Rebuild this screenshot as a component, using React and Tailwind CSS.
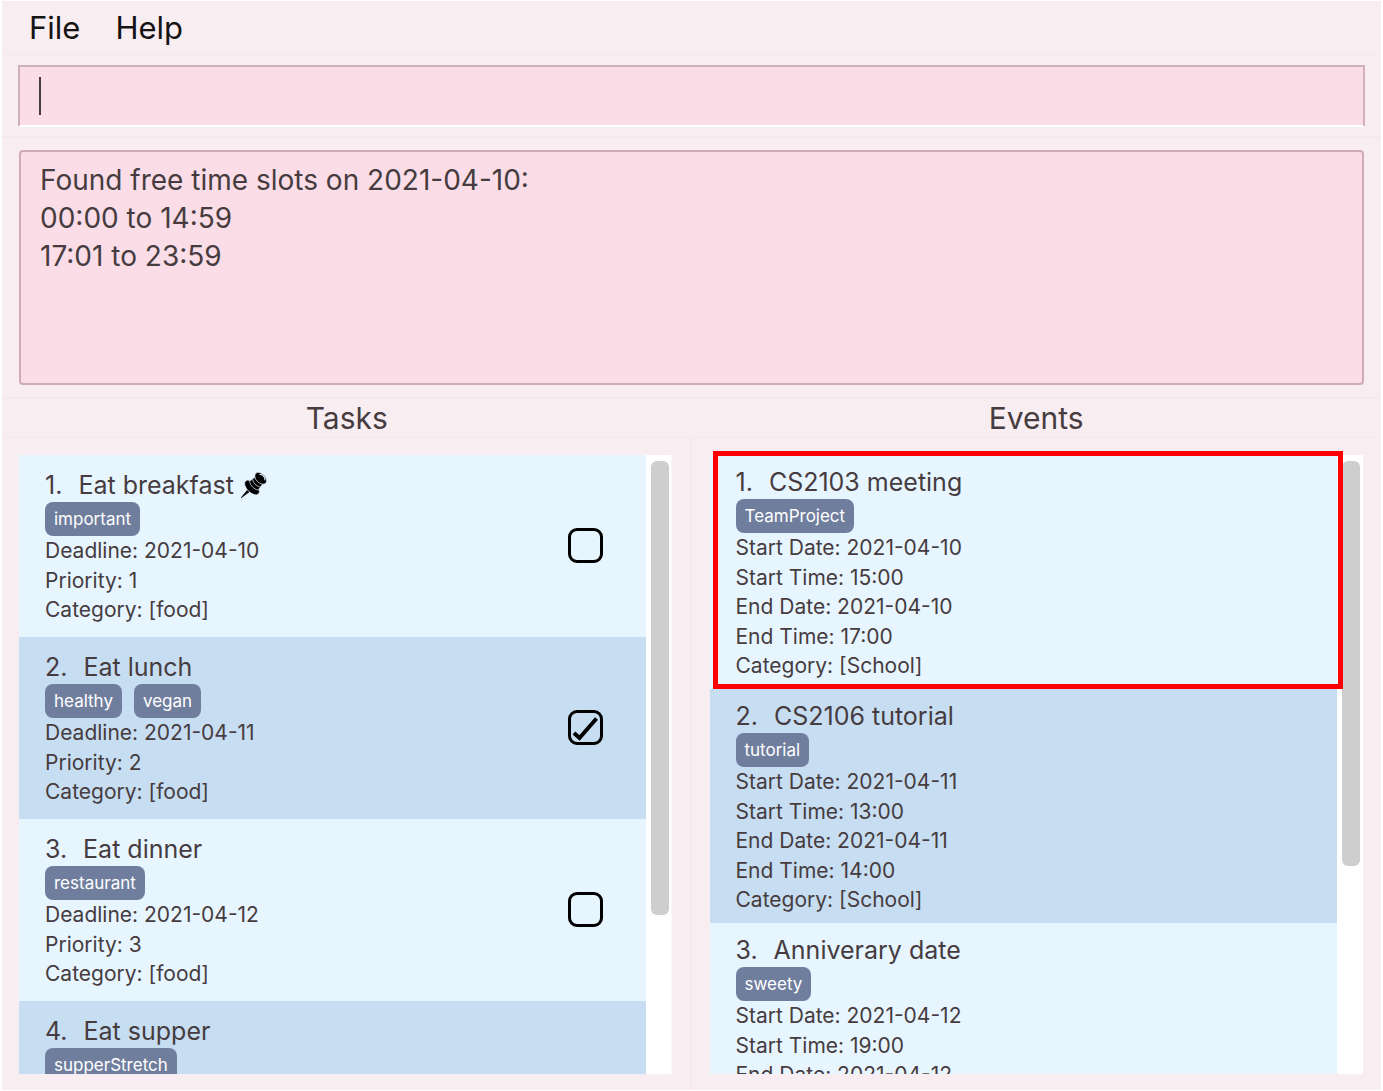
import React from "react";

const tasks = [
  { name: "Eat breakfast", pinned: true, tags: ["important"], details: ["Deadline: 2021-04-10", "Priority: 1", "Category: [food]"], done: false },
  { name: "Eat lunch", tags: ["healthy", "vegan"], details: ["Deadline: 2021-04-11", "Priority: 2", "Category: [food]"], done: true },
  { name: "Eat dinner", tags: ["restaurant"], details: ["Deadline: 2021-04-12", "Priority: 3", "Category: [food]"], done: false },
  { name: "Eat supper", tags: ["supperStretch"], details: [], done: false },
];

const events = [
  {
    name: "CS2103 meeting",
    tags: ["TeamProject"],
    highlighted: true,
    details: ["Start Date: 2021-04-10", "Start Time: 15:00", "End Date: 2021-04-10", "End Time: 17:00", "Category: [School]"],
  },
  {
    name: "CS2106 tutorial",
    tags: ["tutorial"],
    details: ["Start Date: 2021-04-11", "Start Time: 13:00", "End Date: 2021-04-11", "End Time: 14:00", "Category: [School]"],
  },
  {
    name: "Anniverary date",
    tags: ["sweety"],
    details: ["Start Date: 2021-04-12", "Start Time: 19:00", "End Date: 2021-04-12"],
  },
];

function Pushpin() {
  return (
    <svg viewBox="0 0 28 28" className="ml-1.5 size-7 shrink-0" aria-label="Pinned" role="img">
      <path d="M1.200 26.800 8 18.300l2 2z" fill="#000" stroke="#000" strokeWidth=".7" />
      <g stroke="#e7f5ff" strokeWidth=".7">
        <ellipse cx="12" cy="16.500" rx="9.200" ry="5" transform="rotate(45 12 16.500)" fill="#000" />
        <path d="M9.500 10.200 16.500 5l7 7-5.300 7c-4-.5-7.700-4.200-8.700-8.800z" fill="#000" />
        <ellipse cx="20.700" cy="7.300" rx="7" ry="4.600" transform="rotate(45 20.700 7.300)" fill="#000" />
        <path d="M12.500 8.500c.8 3.600 3.700 6.600 7.300 7.400" fill="none" />
      </g>
      <path d="M19.500 3.600c1.600-.5 3.700.7 4.800 2.500.8 1.300.9 2.500.4 3.300" fill="none" stroke="#e7f5ff" strokeWidth="1.100" />
    </svg>
  );
}

function DoneBox({ name, done }) {
  return (
    <label className="relative mr-[43px] flex size-[35px] shrink-0 self-center">
      <input
        type="checkbox"
        defaultChecked={done}
        aria-label={name + " done"}
        className="peer size-full appearance-none rounded-[9px] border-[3px] border-black"
      />
      <svg viewBox="0 0 35 35" className="pointer-events-none absolute inset-0 hidden peer-checked:block" aria-hidden="true">
        <path d="M6 23l5.500 5L28.500 8.500" fill="none" stroke="#000" strokeWidth="4" />
      </svg>
    </label>
  );
}

function Card({ item, index, children, className }) {
  return (
    <li className={"relative flex items-start justify-between pl-[26px] odd:bg-[#e7f5ff] even:bg-[#c7ddf1] " + className}>
      <div>
        <h3 className="flex h-[34px] items-center text-[25px] leading-9">
          <span className="mr-4">{index}.</span>
          <span>{item.name}</span>
          {item.pinned && <Pushpin />}
        </h3>
        <div className="flex gap-3">
          {item.tags.map((tag) => (
            <span key={tag} className="h-[34px] rounded-lg bg-[#707e9e] px-[9px] text-[17px] leading-[34px] text-white">
              {tag}
            </span>
          ))}
        </div>
        <ul>
          {item.details.map((line) => (
            <li key={line} className="text-[21px] odd:leading-[30px] even:leading-[29px]">
              {line}
            </li>
          ))}
        </ul>
      </div>
      {children}
      {item.highlighted && <div className="pointer-events-none absolute -top-1 -right-1.5 bottom-0 left-[3px] z-10 border-5 border-[#ff0000]" />}
    </li>
  );
}

function ListPane({ children, thumb }) {
  return (
    <div className="flex min-h-0 flex-1 bg-white [clip-path:inset(-8px_0_0_0)]">
      <ol className="h-0 min-w-0 flex-1">{children}</ol>
      <div className="w-[26px] pt-1.5 pl-[5px]">
        <div className={"w-[18px] rounded-md bg-[#cecece] " + thumb} />
      </div>
    </div>
  );
}

export default function App() {
  return (
    <div className="h-screen overflow-hidden bg-white px-0.5 py-px font-['Inter','Liberation_Sans',sans-serif] text-[#463c3f]">
      <div className="flex h-full flex-col bg-[#f8edf1]">
        <nav className="flex h-[55px] shrink-0 items-center gap-[35px] border-b border-[#f5e9ed] pl-[27px] text-[31px] text-[#151314]">
          <button type="button">File</button>
          <button type="button">Help</button>
        </nav>
        <div className="shrink-0 border-b-2 border-[#f5e9ed] px-4 py-[9px]">
          <div className="flex h-[62px] items-center border-2 border-[#cdb0bb] border-b-white bg-[#fbdde7] pl-[19px]">
            <div className="h-[38px] w-0.5 bg-[#463c3f]" />
            <input type="text" aria-label="Command" className="h-full min-w-0 flex-1 bg-transparent text-[28px] caret-transparent outline-none" />
          </div>
        </div>
        <div className="shrink-0 border-b-2 border-[#f5e9ed] px-[17px] py-3">
          <textarea
            readOnly
            aria-label="Result"
            className="block h-[235px] w-full resize-none rounded border-2 border-[#cfabb8] bg-[#fbdde7] px-[19px] py-[9px] text-[28px] leading-[38px] outline-none"
            defaultValue={"Found free time slots on 2021-04-10:\n00:00 to 14:59\n17:01 to 23:59"}
          />
        </div>
        <div className="grid shrink-0 grid-cols-2 border-b border-[#f5e9ed] text-center text-[30px] leading-[38px]">
          <h2>Tasks</h2>
          <h2>Events</h2>
        </div>
        <div className="grid min-h-0 flex-1 grid-cols-2">
          <section aria-label="Tasks" className="flex flex-col border-r-2 border-[#f6e9ee] pt-[17px] pr-[18px] pb-4 pl-[17px]">
            <ListPane thumb="h-[74%]">
              {tasks.map((task, i) => (
                <Card key={task.name} item={task} index={i + 1} className="min-h-[182px] pt-[13px]">
                  <div className="-mt-[13px] flex min-h-[180px]">
                    <DoneBox name={task.name} done={task.done} />
                  </div>
                </Card>
              ))}
            </ListPane>
          </section>
          <section aria-label="Events" className="flex flex-col pt-[17px] pr-[18px] pb-4 pl-[18px]">
            <ListPane thumb="h-[66%]">
              {events.map((event, i) => (
                <Card key={event.name} item={event} index={i + 1} className="pt-[10px] pb-2" />
              ))}
            </ListPane>
          </section>
        </div>
      </div>
    </div>
  );
}
